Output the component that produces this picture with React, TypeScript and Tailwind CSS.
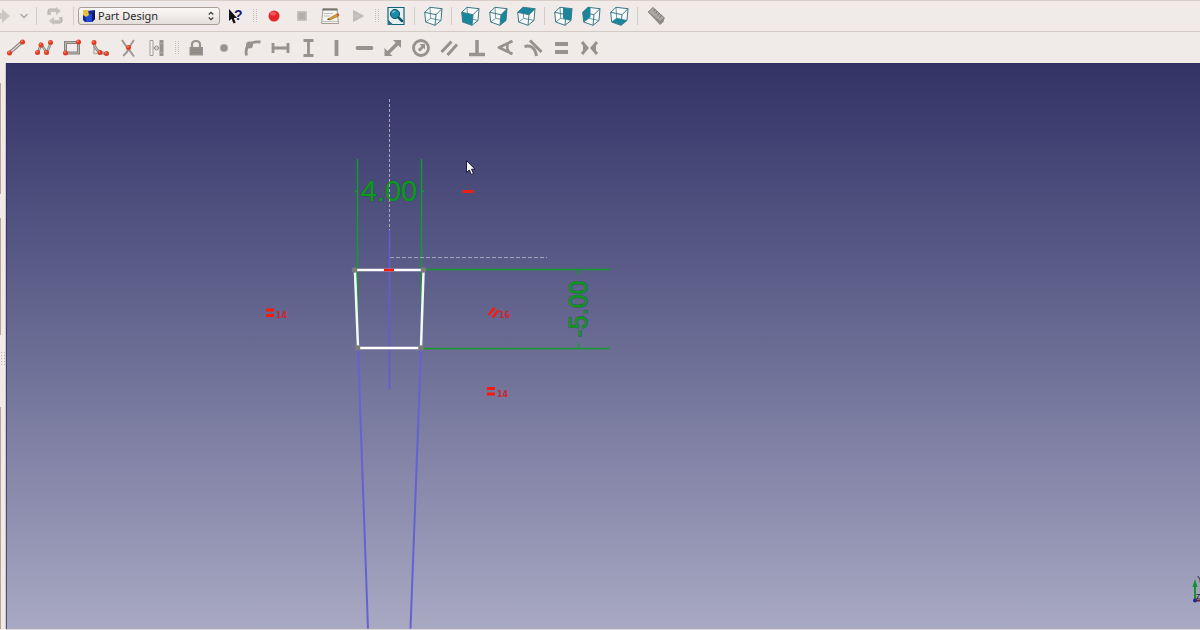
import type { ReactNode } from 'react';

const GREY = '#96928e';

function Icon({ children }: { children: ReactNode }) {
  return (
    <svg viewBox="0 0 20 20" className="h-5 w-5 shrink-0" fill="none" aria-hidden="true">
      {children}
    </svg>
  );
}

function ToolButton({ label, children }: { label: string; children: ReactNode }) {
  return (
    <button type="button" aria-label={label} title={label} className="flex h-7 w-7 shrink-0 items-center justify-center">
      <Icon>{children}</Icon>
    </button>
  );
}

function Separator() {
  return (
    <div className="flex w-[9px] shrink-0 justify-center">
      <div className="h-[18px] w-px bg-[#d3cdc8]" />
    </div>
  );
}

function Handle() {
  return (
    <div className="flex w-[10px] shrink-0 justify-center">
      <svg viewBox="0 0 4 14" className="h-[14px] w-1" aria-hidden="true">
        <path d="M.5 0v14M3.5 0v14" stroke="#c3bdb8" strokeDasharray="1 1" />
      </svg>
    </div>
  );
}

// Corners of the view cube, front face first
const cubeFaces = {
  none: '',
  front: '1.7,6.3 13,8.7 12,19.3 2.7,16',
  right: '13,8.7 19,2.7 18,14.5 12,19.3',
  top: '1.7,6.3 7,1.3 19,2.7 13,8.7',
  rear: '10,1.8 19,2.7 18,14.5 10,12.5',
  left: '1.7,6.3 7,1.3 9.5,2 9.5,11 2.7,16',
  bottom: '2.7,16 7.7,12.3 18,14.5 12,19.3',
};

function Cube({ face, label }: { face: keyof typeof cubeFaces; label: string }) {
  return (
    <ToolButton label={label}>
      <path d="M1.7 6.3 7 1.3 19 2.7 18 14.5 12 19.3 2.7 16z" fill="#f8f8f7" />
      <path d="M7 1.3 7.7 12.3 18 14.5M7.7 12.3 2.7 16" stroke="#6c9ca6" />
      <polygon points={cubeFaces[face]} fill="#1787a0" />
      <path d="M1.7 6.3 13 8.7 12 19.3 2.7 16zM1.7 6.3 7 1.3 19 2.7 18 14.5 12 19.3M13 8.7 19 2.7" stroke="#3b7987" strokeLinejoin="round" />
    </ToolButton>
  );
}

function Node({ x, y }: { x: number; y: number }) {
  return (
    <>
      <circle cx={x} cy={y} r="2.5" fill="#e03a22" />
      <circle cx={x - 0.6} cy={y - 0.8} r="0.9" fill="#f98b70" />
    </>
  );
}

function MainToolbar() {
  return (
    <div className="flex h-8 items-center overflow-hidden border-t border-b border-t-[#d8cfca] border-b-[#d3cbc5]">
      <button type="button" aria-label="Redo" className="flex w-4 shrink-0 items-center">
        <svg viewBox="0 0 16 20" className="h-5 w-4" aria-hidden="true">
          <path d="M0 7h2V3l8 7-8 7v-4H0z" fill="#cbc7c3" />
        </svg>
      </button>
      <button type="button" aria-label="Redo history" className="flex w-4 shrink-0 items-center justify-center">
        <svg viewBox="0 0 8 6" className="h-[6px] w-2" fill="none" aria-hidden="true">
          <path d="M.5 1 4 4.5 7.5 1" stroke="#aaa5a1" strokeWidth="1.3" />
        </svg>
      </button>
      <Separator />
      <ToolButton label="Refresh">
        <path d="M3 9V5q0-2 2-2h6V1l5 4-5 4V6H6v3zM17 11v4q0 2-2 2H9v2l-5-4 5-4v3h5v-3z" fill="#c6c2be" />
        <path d="M3 9V5q0-2 2-2h6M17 11v4q0 2-2 2H9" stroke="#b3afab" />
      </ToolButton>
      <Separator />
      <div className="relative w-[142px] shrink-0">
        <select
          aria-label="Workbench"
          className="block h-[18px] w-full appearance-none rounded-[3px] border border-[#a8a099] bg-linear-to-b from-[#faf8f7] to-[#e3dedb] pl-[19px] font-['Noto_Sans','Open_Sans',sans-serif] text-[11px] leading-4 text-[#2c2a28]"
        >
          <option>Part Design</option>
        </select>
        <svg viewBox="0 0 14 14" className="pointer-events-none absolute top-[2px] left-1 h-[14px] w-[14px]" aria-hidden="true">
          <path d="M1 4 4 2l9-1v9l-3 3H3L1 11z" fill="#102a9c" />
          <path d="M4 5h6v8H4z" fill="#2148d6" />
          <path d="m10 5 3-3v8l-3 3z" fill="#0a1765" />
          <path d="M1 1h5l1 5-3 2-3-2z" fill="#e8c33c" />
        </svg>
        <svg viewBox="0 0 6 10" className="pointer-events-none absolute top-1 right-[6px] h-[10px] w-[6px]" fill="none" aria-hidden="true">
          <path d="m.8 3.5 2.2-2.2 2.2 2.2M.8 6.5 3 8.7l2.2-2.2" stroke="#3c3835" strokeWidth="1.2" />
        </svg>
      </div>
      <button type="button" aria-label="What's this?" className="flex w-[30px] shrink-0 items-center justify-center">
        <Icon>
          <path d="M4 3v12l2.5-2.2 2 4.7 2.2-1-2-4.5H12z" fill="#111" />
          <text x="9" y="14" fontFamily="Liberation Sans, sans-serif" fontWeight="700" fontSize="14" fill="#14196b">?</text>
        </Icon>
      </button>
      <Handle />
      <ToolButton label="Record macro">
        <circle cx="10" cy="10" r="5.5" fill="#e4262b" />
        <ellipse cx="9" cy="7.5" rx="3" ry="2" fill="#f0585a" />
      </ToolButton>
      <ToolButton label="Stop recording">
        <path d="M5 5h10v10H5z" fill="#c9c5c1" />
        <path d="M6.5 6.5h7v7h-7z" fill="#b3afab" />
      </ToolButton>
      <ToolButton label="Edit macros">
        <path d="M3 3h14l1.5 14.5h-17z" fill="#f6f4ee" stroke="#a19d95" />
        <path d="M2.5 2.5h15v2h-15z" fill="#77736a" />
        <path d="M4 7.5h9M4 10h6M2 15.5h16" stroke="#c3bfb8" />
        <path d="m8 13 9-5 1.5 2L10 14z" fill="#dba030" stroke="#8c5d1d" strokeWidth=".6" />
        <path d="m16.5 8 1.5-1 1.5 2-1.5 1z" fill="#c6503d" />
        <path d="m7 14 1-1.5 2 1.2z" fill="#443b33" />
      </ToolButton>
      <ToolButton label="Run macro">
        <path d="M5.5 4.5v11l10-5.5z" fill="#c3bfbb" stroke="#afaba7" strokeWidth=".6" />
      </ToolButton>
      <Handle />
      <ToolButton label="Fit all">
        <path d="M2 1.5h16v17H6l-4-4z" fill="#e8f1f2" stroke="#146277" strokeWidth="1.2" />
        <path d="m1.5 14 5 5h-5z" fill="#2b7788" />
        <circle cx="9" cy="8" r="4.6" fill="#188ba5" stroke="#0d5468" />
        <path d="M6.5 7q.8-2 3-2" stroke="#8acbd7" strokeWidth="1.2" />
        <path d="m12.5 11.5 3.5 3.5" stroke="#0d5468" strokeWidth="2.5" strokeLinecap="round" />
      </ToolButton>
      <Separator />
      <Cube face="none" label="Axonometric" />
      <Separator />
      <Cube face="front" label="Front" />
      <Cube face="right" label="Right" />
      <Cube face="top" label="Top" />
      <Separator />
      <Cube face="rear" label="Rear" />
      <Cube face="left" label="Left" />
      <Cube face="bottom" label="Bottom" />
      <Separator />
      <ToolButton label="Measure distance">
        <path d="m2 6 5-4.5L18.5 12l-1 4-3.5 3z" fill="#8f8b87" />
        <path d="m2 6 5-4.5L18.5 12 14 15.5z" fill="#aaa6a2" stroke="#807c78" strokeWidth=".8" />
        <path d="m7.5 5 2-1.5M9.5 7l2-1.5M11.5 9l2-1.5M13.5 11l2-1.5" stroke="#6d6965" />
      </ToolButton>
    </div>
  );
}

function SketchToolbar() {
  return (
    <div className="flex h-[31px] items-center overflow-hidden pl-[2px]">
      <ToolButton label="Line">
        <path d="M3.5 15 16 4" stroke="#85817d" strokeWidth="3.5" />
        <path d="M3.5 15 16 4" stroke="#d5d2cf" strokeWidth="1.5" />
        <Node x={3.5} y={15} />
        <Node x={16.5} y={4} />
      </ToolButton>
      <ToolButton label="Polyline">
        <path d="m4 14.5 3-8 6 8 4-10" stroke="#85817d" strokeWidth="2.5" />
        <path d="m4 14.5 3-8 6 8 4-10" stroke="#cbc8c5" />
        <Node x={3.5} y={14.5} />
        <Node x={7} y={7} />
        <Node x={12.5} y={14.5} />
        <Node x={16.5} y={4.5} />
      </ToolButton>
      <ToolButton label="Rectangle">
        <path d="M3.5 4.5h13V15h-13z" stroke="#85817d" strokeWidth="3" />
        <path d="M3.5 4.5h13V15h-13z" stroke="#bcb8b4" />
        <Node x={3.5} y={15} />
        <Node x={16.5} y={4} />
      </ToolButton>
      <ToolButton label="Fillet">
        <path d="M4 4v11.5h12.5" stroke="#b7b3af" strokeWidth="1.5" />
        <path d="M4 5q1 9 11 10.5" stroke="#85817d" strokeWidth="2.5" />
        <path d="M4 5q1 9 11 10.5" stroke="#cbc8c5" />
        <Node x={4} y={4.5} />
        <Node x={10} y={14.5} />
        <Node x={16.5} y={15.5} />
      </ToolButton>
      <ToolButton label="Trim">
        <path d="M4 2q3 5 6 8.5l6 8M16 2q-3 4-5 8.5T5 18" stroke="#9c9894" strokeWidth="2" />
        <Node x={10.5} y={9.5} />
      </ToolButton>
      <ToolButton label="External geometry">
        <path d="M4 2.5h3v15H4z" fill="#f2f0ee" stroke="#a19d99" />
        <path d="M13.500 2h4v16h-4z" fill={GREY} />
        <path d="M7 10h6M13 5.5h4M13 14.5h4" stroke="#b1ada9" />
        <circle cx="10.5" cy="10" r="2" stroke={GREY} />
      </ToolButton>
      <div className="flex w-[13px] shrink-0 justify-center">
        <Handle />
      </div>
      <ToolButton label="Constrain lock">
        <path d="M2.5 9H16v8.500H2.5z" fill={GREY} />
        <path d="M5 9.500v-3Q5 3 9 3t4 3.5v3" stroke={GREY} strokeWidth="2.2" />
        <path d="M4 12h11M4 14.5h11" stroke="#858179" strokeWidth=".7" />
      </ToolButton>
      <ToolButton label="Constrain coincident">
        <circle cx="9" cy="10" r="3.8" fill={GREY} stroke="#b5b1ad" strokeWidth=".6" />
      </ToolButton>
      <ToolButton label="Constrain point on object">
        <path d="M3.5 17.5Q2 10 6 6.5T17.500 4" stroke={GREY} strokeWidth="2.8" />
        <circle cx="6.5" cy="7" r="3.5" fill={GREY} />
      </ToolButton>
      <ToolButton label="Constrain horizontal distance">
        <path d="M2 5v10M17 5v10M2 10h15" stroke={GREY} strokeWidth="2.8" />
      </ToolButton>
      <ToolButton label="Constrain vertical distance">
        <path d="M4.5 2.5h10M4.5 17.5h10M9.5 2.5v15" stroke={GREY} strokeWidth="2.8" />
      </ToolButton>
      <ToolButton label="Constrain vertical">
        <path d="M9.5 2v16" stroke={GREY} strokeWidth="3.8" />
      </ToolButton>
      <ToolButton label="Constrain horizontal">
        <path d="M2.5 10h14" stroke={GREY} strokeWidth="3.8" strokeLinecap="round" />
      </ToolButton>
      <ToolButton label="Constrain length">
        <path d="M5 15 15 5" stroke={GREY} strokeWidth="3.5" />
        <path d="M18 2v8l-8-8zM1.5 18v-8l8 8z" fill={GREY} />
      </ToolButton>
      <ToolButton label="Constrain radius">
        <circle cx="10" cy="10" r="7.5" stroke={GREY} strokeWidth="2.8" />
        <path d="m9.5 11 2.5-2.5" stroke={GREY} strokeWidth="2.8" />
        <path d="M8.5 6H14v5.5z" fill={GREY} />
        <circle cx="9" cy="11.5" r="1.7" fill={GREY} />
      </ToolButton>
      <ToolButton label="Constrain parallel">
        <path d="M2.5 14 12.5 3.5M8.5 17 18 6.5" stroke={GREY} strokeWidth="3" />
      </ToolButton>
      <ToolButton label="Constrain perpendicular">
        <path d="M2 16.5h16M10 2v14.500" stroke={GREY} strokeWidth="3.5" />
      </ToolButton>
      <ToolButton label="Constrain angle">
        <path d="M17.5 3 4 9.5 17.5 16" stroke={GREY} strokeWidth="2.8" strokeLinejoin="round" />
        <path d="M13 6q-2 4 1 8" stroke={GREY} strokeWidth="2.5" />
      </ToolButton>
      <ToolButton label="Constrain tangent">
        <path d="M7 2.5 18.5 14" stroke={GREY} strokeWidth="3" />
        <path d="M1.5 8.5q10-2.500 12 9.500" stroke={GREY} strokeWidth="3" />
      </ToolButton>
      <ToolButton label="Constrain equal">
        <path d="M4 6h13M4 14h13" stroke={GREY} strokeWidth="4.2" />
      </ToolButton>
      <ToolButton label="Constrain symmetric">
        <path d="m3 4 5 6-5 6M18 4l-5 6 5 6" stroke={GREY} strokeWidth="3" />
        <path d="M4 7.5 8.5 10 4 12.500zM17 7.5 12.5 10l4.500 2.500z" fill={GREY} />
      </ToolButton>
    </div>
  );
}

function SketchView() {
  return (
    <svg
      viewBox="6 63 1194 566"
      preserveAspectRatio="xMinYMin slice"
      className="block min-w-0 flex-1 bg-linear-to-b from-[#333366] to-[#a9a9c3]"
      fill="none"
      role="img"
      aria-label="Sketch view"
    >
      <path d="M6.5 629V63.5H1200" stroke="#2b2b63" strokeOpacity=".7" />

      {/* dimensions */}
      <g fontFamily="Liberation Sans, Arial, sans-serif" fill="#0b9a1c" stroke="#1c5a3c" strokeWidth="1.2" strokeOpacity=".6" paintOrder="stroke" textAnchor="middle">
        <text x="389" y="201" fontSize="29">4.00</text>
        <text transform="translate(587 309) rotate(-90)" fontSize="25">-5.00</text>
      </g>
      <path
        d="M357.500 159v187M421.500 159v187M426 269.500h184M424 348.500h186M355 191.500h3M421 191.500h3M578.500 270v5M578.500 343v5"
        stroke="#139c2a"
        strokeWidth="1.4"
      />

      {/* axes */}
      <path d="M389.500 99v131" stroke="#a9a9bb" strokeDasharray="3 2" />
      <path d="M390 257.500h157" stroke="#a5a5b8" strokeDasharray="4 2" />
      <path d="M389.500 230v159" stroke="#605cd8" strokeWidth="1.6" />
      <path d="m358 349 10 279.500M421 349l-10.500 279.500" stroke="#6462d2" strokeWidth="2" />

      {/* profile */}
      <path d="M355 270h69M358 348h63" stroke="#fff" strokeWidth="2.500" />
      <path d="m355 272 3 75M423.500 272l-2.500 75" stroke="#f4fbf4" strokeWidth="2.500" />
      <path d="M384 270h10" stroke="#f51b0d" strokeWidth="2.500" />
      <g fill="#7b7b7b">
        <circle cx="354.500" cy="270" r="2.800" />
        <circle cx="423.500" cy="270" r="2.800" />
        <circle cx="357.500" cy="348" r="2.800" />
        <circle cx="421" cy="348" r="2.800" />
      </g>

      {/* constraint markers */}
      <path d="M462.500 191.500h11" stroke="#ea2018" strokeWidth="3" />
      <path d="M266 310h8M266 315.500h8M487 388.500h8M487 394h8" stroke="#f91a0c" strokeWidth="2.800" />
      <path d="m488.500 315 6-7.500M492.500 317.500l6-7.500" stroke="#f91a0c" strokeWidth="2.500" />
      <g fontFamily="DejaVu Sans, sans-serif" fontWeight="700" fontSize="8" fill="#cb2731">
        <text x="276" y="318">14</text>
        <text x="499" y="318">16</text>
        <text x="497" y="397">14</text>
      </g>

      {/* axis cross */}
      <path d="M1195 600v-15" stroke="#15912f" strokeWidth="2" />
      <path d="m1192.500 587 2.500-8 2.500 8z" fill="#15912f" />
      <path d="M1195 600.500h5" stroke="#7a2020" strokeWidth="2" />
      <circle cx="1195" cy="600.500" r="2" fill="#1a2499" />
      <g fontFamily="Liberation Sans, Arial, sans-serif" fontSize="9" fill="#222">
        <text x="1197" y="582">Y</text>
        <text x="1196" y="599">z</text>
      </g>

      {/* pointer */}
      <path d="M466.500 160.500v12l2.800-2.500 2 4.500 2.200-1-2-4.300h3.500z" fill="#f7f5f2" stroke="#1c1c30" />
    </svg>
  );
}

export default function App() {
  return (
    <div className="flex min-h-screen flex-col bg-[#f0ebe8]">
      <MainToolbar />
      <SketchToolbar />
      <main className="flex flex-1">
        <aside className="flex w-[6px] shrink-0 flex-col border-r border-[#cfc8c3] pt-5">
          <div className="h-[111px] w-px bg-[#b5a59c]" />
          <div className="mt-6 h-[117px] w-px bg-[#b5a59c]" />
          <div className="flex h-[72px] items-center pb-6 pl-px">
            <svg viewBox="0 0 4 14" className="h-[14px] w-1" aria-hidden="true">
              <path d="M.5 0v14M3.5 0v14" stroke="#bdb6b0" strokeDasharray="1 2" />
            </svg>
          </div>
          <div className="w-px flex-1 bg-[#b5a59c]" />
        </aside>
        <SketchView />
      </main>
      <footer className="ml-[6px] h-px bg-[#dddbd3]" />
    </div>
  );
}
